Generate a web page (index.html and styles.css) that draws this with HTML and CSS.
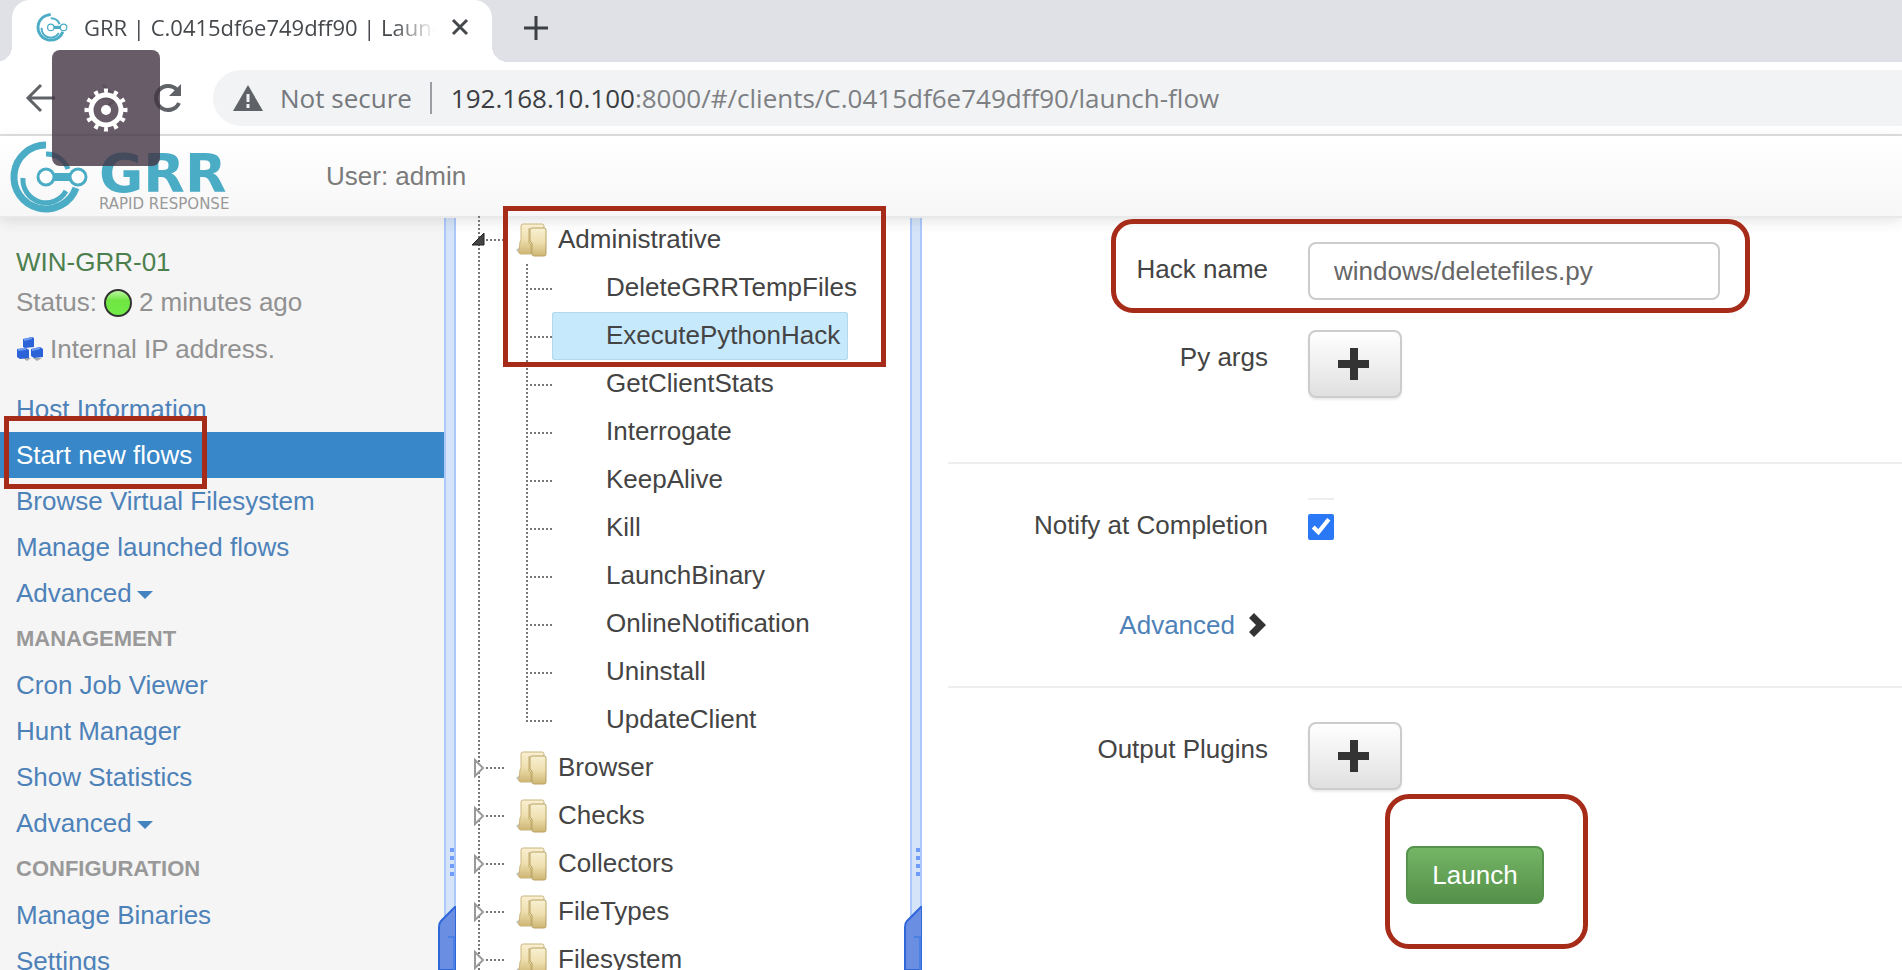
FILE: index.html
```html
<!DOCTYPE html>
<html lang="en">
<head>
<meta charset="utf-8">
<title>GRR | C.0415df6e749dff90 | Launch flow</title>
<link rel="stylesheet" href="styles.css">
</head>
<body>
<svg class="defs" aria-hidden="true">
  <defs>
    <linearGradient id="gold" x1="0" y1="0" x2="0" y2="1">
      <stop offset="0" stop-color="#f8f0d2"/><stop offset="0.5" stop-color="#efe0b0"/><stop offset="1" stop-color="#cdb573"/>
    </linearGradient>
    <linearGradient id="green" x1="0" y1="0" x2="0" y2="1">
      <stop offset="0" stop-color="#c4f8a8"/><stop offset="0.4" stop-color="#6fe642"/><stop offset="1" stop-color="#72ec48"/>
    </linearGradient>
    <symbol id="mark" viewBox="0 0 80 80">
      <g fill="none" stroke="#4bacc6">
        <path d="M37 9A32 32 0 1 0 67 52" stroke-width="7"/>
        <path d="M14 42A23 23 0 0 0 57 55" stroke-width="5"/>
        <path d="M37 18A23 23 0 0 1 59 33" stroke-width="5"/>
        <path d="M44 41H62" stroke-width="8"/>
        <circle cx="37" cy="41" r="8" fill="#fff" stroke-width="3"/>
        <circle cx="69" cy="41" r="8" fill="#fff" stroke-width="3"/>
      </g>
    </symbol>
    <symbol id="folder" viewBox="0 0 32 34">
      <path d="M0 27l5-4v9z" fill="#999" opacity="0.6"/>
      <path d="M5 3q0-2 2-2h19q2 0 2 2v27q0 1-2 1H5q-3 0-2-3l1-9 1-2z" fill="url(#gold)" stroke="#cbb67c"/>
      <path d="M13 5v15l2 2v8" fill="none" stroke="#c2ab6c"/>
      <path d="M14 7q0-2 2-2h12q2 0 2 2v24q0 2-2 2H18q-2 0-2-2V20l-2-2z" fill="url(#gold)" stroke="#b9a265"/>
    </symbol>
    <symbol id="plus" viewBox="0 0 32 32"><path d="M12 0h8v12h11v8H20v12h-8V20H0v-8h12z" fill="#333"/></symbol>
    <symbol id="closed" viewBox="0 0 16 20"><path d="M5 2v16l8-8z" fill="#fff" stroke="#999" stroke-width="2"/></symbol>
    <symbol id="handle" viewBox="0 0 18 64">
      <path d="M17 1L3 15Q1 17 1 21V64H18V1z" fill="#6a8fe2" stroke="#2f66d8" stroke-width="2"/>
      <path d="M10 31h6v33" fill="none" stroke="#4a80e4" stroke-width="2"/>
    </symbol>
  </defs>
</svg>

<div class="tabstrip">
  <div class="tab">
    <svg class="tab-icon"><use href="#mark"/></svg>
    <span class="tab-title">GRR | C.0415df6e749dff90 | Launch flow</span>
    <button class="plain" aria-label="Close tab"><svg width="18" height="18" viewBox="0 0 18 18"><path d="M2 2l14 14M16 2L2 16" stroke="#45484c" stroke-width="3"/></svg></button>
  </div>
  <button class="plain new-tab" aria-label="New tab"><svg width="24" height="24" viewBox="0 0 24 24"><path d="M12 0v24M0 12h24" stroke="#3c4043" stroke-width="3"/></svg></button>
</div>

<div class="toolbar">
  <button class="plain" aria-label="Back"><svg width="30" height="30" viewBox="0 0 30 30"><path d="M30 15H3M16 2L3 15l13 13" fill="none" stroke="#5f6368" stroke-width="3"/></svg></button>
  <button class="plain" aria-label="Forward"><svg width="30" height="30" viewBox="0 0 30 30"><path d="M0 15h27M14 2l13 13-13 13" fill="none" stroke="#babcbe" stroke-width="3"/></svg></button>
  <button class="plain" aria-label="Reload"><svg width="30" height="30" viewBox="0 0 30 30"><path d="M26 20A12 12 0 1 1 24 7" fill="none" stroke="#5f6368" stroke-width="4"/><path d="M28 1v12H16z" fill="#5f6368"/></svg></button>
  <div class="omnibox">
    <svg width="30" height="26" viewBox="0 0 30 26"><path d="M15 0l15 26H0z" fill="#5f6368"/><path d="M15 9v8M15 19v4" stroke="#f1f3f4" stroke-width="3"/></svg>
    <span class="secure">Not secure</span>
    <span class="url"><span class="host">192.168.10.100</span>:8000/#/clients/C.0415df6e749dff90/launch-flow</span>
  </div>
</div>

<button class="gear" aria-label="Settings">
  <svg width="44" height="44" viewBox="0 0 44 44" fill="none" stroke="#fff">
    <circle cx="22" cy="22" r="15" stroke-width="5"/>
    <circle cx="22" cy="22" r="19" stroke-width="5" pathLength="120" stroke-dasharray="4 6" stroke-dashoffset="2"/>
    <circle cx="22" cy="22" r="5" fill="#fff" stroke="none"/>
  </svg>
</button>

<header class="navbar">
  <a class="brand" href="#" aria-label="GRR Rapid Response">
    <svg class="brand-mark"><use href="#mark"/></svg>
    <span class="brand-text"><span class="brand-name">GRR</span><span class="brand-sub">RAPID RESPONSE</span></span>
  </a>
  <span class="user">User: admin</span>
</header>

<div class="content">
  <aside class="sidebar">
    <div class="client">
      <div class="client-name">WIN-GRR-01</div>
      <div class="client-line">Status:<svg width="30" height="30" viewBox="0 0 30 30"><circle cx="15" cy="16" r="13" fill="url(#green)" stroke="#333" stroke-width="2"/></svg>2 minutes ago</div>
      <div class="client-line ip"><svg width="28" height="26" viewBox="0 0 28 26"><path d="M7 22l4 3 4-3M17 22l4 3 5-3" fill="#aaa"/><path d="M7 3l9-2 2 1v9l-9 1-2-1zM1 13l9-1 3 2v8l-9 1-3-2zM15 13l9-2 3 2v8l-9 1-3-2z" fill="#2c62d8"/><path d="M8 4l8-2M2 14l8-1M16 14l8-2" stroke="#6f9bf0" stroke-width="2"/></svg>Internal IP address.</div>
    </div>
    <nav class="nav">
      <a href="#">Host Information</a>
      <a href="#" class="active">Start new flows<span class="mark mark-nav"></span></a>
      <a href="#">Browse Virtual Filesystem</a>
      <a href="#">Manage launched flows</a>
      <a href="#">Advanced<span class="caret"></span></a>
      <h2>MANAGEMENT</h2>
      <a href="#">Cron Job Viewer</a>
      <a href="#">Hunt Manager</a>
      <a href="#">Show Statistics</a>
      <a href="#">Advanced<span class="caret"></span></a>
      <h2>CONFIGURATION</h2>
      <a href="#">Manage Binaries</a>
      <a href="#">Settings</a>
    </nav>
  </aside>

  <div class="splitter"><span class="grip"></span><svg class="handle"><use href="#handle"/></svg></div>

  <div class="tree-pane">
    <span class="mark mark-tree"></span>
    <ul class="tree">
      <li>
        <div class="node"><svg class="toggle" viewBox="0 0 16 20"><path d="M2 15H14V3z" fill="#444" stroke="#222"/></svg><span class="dots"></span><svg class="folder"><use href="#folder"/></svg><a href="#">Administrative</a></div>
        <ul class="leaves">
          <li><a href="#">DeleteGRRTempFiles</a></li>
          <li><a href="#" class="selected">ExecutePythonHack</a></li>
          <li><a href="#">GetClientStats</a></li>
          <li><a href="#">Interrogate</a></li>
          <li><a href="#">KeepAlive</a></li>
          <li><a href="#">Kill</a></li>
          <li><a href="#">LaunchBinary</a></li>
          <li><a href="#">OnlineNotification</a></li>
          <li><a href="#">Uninstall</a></li>
          <li><a href="#">UpdateClient</a></li>
        </ul>
      </li>
      <li><div class="node"><svg class="toggle"><use href="#closed"/></svg><span class="dots"></span><svg class="folder"><use href="#folder"/></svg><a href="#">Browser</a></div></li>
      <li><div class="node"><svg class="toggle"><use href="#closed"/></svg><span class="dots"></span><svg class="folder"><use href="#folder"/></svg><a href="#">Checks</a></div></li>
      <li><div class="node"><svg class="toggle"><use href="#closed"/></svg><span class="dots"></span><svg class="folder"><use href="#folder"/></svg><a href="#">Collectors</a></div></li>
      <li><div class="node"><svg class="toggle"><use href="#closed"/></svg><span class="dots"></span><svg class="folder"><use href="#folder"/></svg><a href="#">FileTypes</a></div></li>
      <li><div class="node"><svg class="toggle"><use href="#closed"/></svg><span class="dots"></span><svg class="folder"><use href="#folder"/></svg><a href="#">Filesystem</a></div></li>
    </ul>
  </div>

  <div class="splitter"><span class="grip"></span><svg class="handle"><use href="#handle"/></svg></div>

  <main class="form">
    <div class="row">
      <span class="mark mark-hack"></span>
      <label for="hack">Hack name</label>
      <input class="text" id="hack" type="text" value="windows/deletefiles.py">
    </div>
    <div class="row args">
      <label for="args">Py args</label>
      <button class="btn" id="args" aria-label="Add argument"><svg width="32" height="32"><use href="#plus"/></svg></button>
    </div>
    <hr>
    <div class="row notify">
      <label for="notify">Notify at Completion</label>
      <span class="check"><input id="notify" type="checkbox" checked></span>
    </div>
    <div class="row more">
      <a href="#">Advanced<svg width="20" height="26" viewBox="0 0 20 26"><path d="M1 6l5-5 12 12L6 25l-5-5 7-7z" fill="#333"/></svg></a>
    </div>
    <hr>
    <div class="row plugins">
      <label for="plugins">Output Plugins</label>
      <button class="btn" id="plugins" aria-label="Add output plugin"><svg width="32" height="32"><use href="#plus"/></svg></button>
    </div>
    <div class="actions">
      <span class="launch-wrap"><button class="launch">Launch</button><span class="mark mark-launch"></span></span>
    </div>
  </main>
</div>
</body>
</html>
```

FILE: styles.css
```css
* { box-sizing: border-box; }

body {
  margin: 0;
  height: 100vh;
  overflow: hidden;
  display: flex;
  flex-direction: column;
  background: #fff;
  color: #444;
  font: 26px/38px "Liberation Sans", Arial, sans-serif;
}

a { color: inherit; text-decoration: none; }
svg { display: block; flex: none; }
ul { list-style: none; margin: 0; padding: 0; }
.defs { position: absolute; width: 0; height: 0; }

.plain { border: 0; padding: 0; background: none; flex: none; }

/* browser frame */
.tabstrip {
  flex: none;
  display: flex;
  align-items: stretch;
  height: 62px;
  padding-left: 12px;
  background: #dfe1e6;
  font-family: "Open Sans", "Noto Sans", sans-serif;
}
.tab {
  position: relative;
  display: flex;
  align-items: center;
  width: 480px;
  padding: 0 23px 8px 24px;
  border-radius: 18px 18px 0 0;
  background: #fff;
}
.tab::before, .tab::after {
  content: "";
  position: absolute;
  bottom: 0;
  width: 16px;
  height: 16px;
}
.tab::before { right: 100%; background: radial-gradient(circle at 0 0, transparent 16px, #fff 16px); }
.tab::after { left: 100%; background: radial-gradient(circle at 100% 0, transparent 16px, #fff 16px); }
.tab-icon { width: 32px; height: 32px; }
.tab-title {
  flex: 1;
  margin: 0 16px;
  overflow: hidden;
  white-space: nowrap;
  font-size: 22px;
  color: #45484c;
  -webkit-mask-image: linear-gradient(to right, #000 88%, transparent);
  mask-image: linear-gradient(to right, #000 88%, transparent);
}
.new-tab { margin: 0 0 6px 32px; }

.toolbar {
  flex: none;
  display: flex;
  align-items: center;
  gap: 34px;
  height: 74px;
  padding-left: 25px;
  border-bottom: 2px solid #e0e0e0;
  font-family: "Open Sans", "Noto Sans", sans-serif;
}
.omnibox {
  flex: 1;
  display: flex;
  align-items: center;
  height: 56px;
  margin-left: -4px;
  padding-left: 20px;
  border-radius: 28px 0 0 28px;
  background: #f1f3f4;
  color: #7d7f83;
}
.secure {
  margin-left: 17px;
  padding-right: 18px;
  border-right: 2px solid #9a9da1;
  line-height: 32px;
  color: #75787c;
}
.url { margin-left: 19px; white-space: nowrap; }
.host { color: #3b3d42; }

.gear {
  position: absolute;
  left: 52px;
  top: 50px;
  z-index: 5;
  display: grid;
  place-items: center;
  width: 108px;
  height: 116px;
  padding: 4px 0 0;
  border: 0;
  border-radius: 8px;
  background: rgba(66, 51, 66, 0.8);
}

/* application header */
.navbar {
  position: relative;
  z-index: 2;
  flex: none;
  display: flex;
  align-items: center;
  height: 80px;
  padding-left: 9px;
  background: linear-gradient(#fff, #f7f7f7);
  box-shadow: 0 2px 0 #e9e9e9, 0 4px 14px rgba(0, 0, 0, 0.12);
}
.brand { display: flex; align-items: center; width: 317px; }
.brand-mark { width: 80px; height: 80px; }
.brand-text { display: flex; flex-direction: column; margin-left: 10px; padding-top: 8px; font-family: "DejaVu Sans", sans-serif; }
.brand-name { font-size: 54px; line-height: 48px; font-weight: bold; color: #4bacc6; }
.brand-sub { font-size: 15px; line-height: 12px; color: #999; white-space: nowrap; }
.user { color: #7b7b7b; }

.content { flex: 1; min-height: 0; display: flex; }

/* left navigation */
.sidebar { flex: none; width: 444px; background: #f5f5f5; }
.client { padding: 26px 16px 16px; line-height: 40px; color: #919191; }
.client-name { color: #4c7f4e; }
.client-line { display: flex; align-items: center; gap: 6px; white-space: nowrap; }
.ip { margin-top: 7px; margin-bottom: 1px; }
.nav a, .nav h2 {
  position: relative;
  display: flex;
  align-items: center;
  height: 46px;
  margin: 0;
  padding-left: 16px;
  white-space: nowrap;
}
.nav a { color: #4d82b9; }
.nav h2 { font-size: 22px; color: #999; }
.nav .active { background: #3887c8; color: #fff; }
.caret {
  margin: 4px 0 0 5px;
  border: 8px solid transparent;
  border-top-color: #4383c0;
  border-bottom-width: 0;
}

.splitter {
  position: relative;
  z-index: 1;
  flex: none;
  width: 12px;
  border: solid #acc8fa;
  border-width: 0 2px;
  background: #d5e4f8;
}
.grip {
  position: absolute;
  right: 0;
  bottom: 94px;
  width: 4px;
  height: 28px;
  background: repeating-linear-gradient(#6f9bfa 0 4px, transparent 4px 8px);
}
.handle { position: absolute; right: -2px; bottom: 0; width: 18px; height: 64px; }

/* flow tree */
.tree-pane { position: relative; z-index: 3; flex: none; width: 454px; padding-left: 14px; }
.tree > li {
  background: repeating-linear-gradient(#777 0 2px, transparent 2px 4px) 8px 0 / 2px 100% no-repeat;
}
.node { display: flex; align-items: center; height: 48px; }
.node a { padding-bottom: 2px; }
.toggle { width: 16px; height: 20px; }
.dots { width: 18px; height: 2px; background: repeating-linear-gradient(to right, #777 0 2px, transparent 2px 4px); }
.folder { width: 32px; height: 34px; margin: 0 10px 0 12px; }
.leaves { margin-left: 56px; }
.leaves li {
  display: flex;
  height: 48px;
  padding-left: 26px;
  background:
    repeating-linear-gradient(#777 0 2px, transparent 2px 4px) 0 0 / 2px 100% no-repeat,
    repeating-linear-gradient(to right, #777 0 2px, transparent 2px 4px) 0 24px / 26px 2px no-repeat;
}
.leaves li:last-child { background-size: 2px 26px, 26px 2px; }
.leaves a { padding: 0 8px 0 54px; line-height: 46px; border-radius: 3px; }
.leaves .selected { background: #c6e9fc; box-shadow: inset 0 0 0 1px #b4d9ee; }

/* flow form */
.form { flex: 1; min-width: 0; padding: 26px 0 0 26px; }
.row { position: relative; display: flex; align-items: flex-start; gap: 40px; }
.row label { width: 320px; margin-top: 8px; text-align: right; }
.text {
  width: 412px;
  height: 58px;
  padding: 0 24px;
  border: 2px solid #ccc;
  border-radius: 8px;
  font: inherit;
  color: #666;
  background: #fff;
}
.btn {
  display: grid;
  place-items: center;
  width: 94px;
  height: 68px;
  padding: 0 2px 0 0;
  border: 2px solid #ccc;
  border-radius: 8px;
  background: linear-gradient(#fff, #e0e0e0);
  box-shadow: 0 2px 2px rgba(0, 0, 0, 0.08);
}
.args { margin-top: 30px; }
hr { height: 2px; margin: 64px 0 34px; border: 0; background: #eee; }
.check { padding-top: 14px; border-top: 2px solid #eee; line-height: 0; }
.check input { width: 26px; height: 26px; margin: 0; accent-color: #2b78f6; }
.more { margin-top: 62px; width: 320px; justify-content: flex-end; }
.more a { display: flex; align-items: center; gap: 13px; color: #4d82b9; }
.more + hr { margin: 42px 0 34px; }
.actions { margin: 56px 0 0 458px; }
.launch-wrap { position: relative; display: inline-block; }
.launch {
  display: block;
  width: 138px;
  height: 58px;
  border: 2px solid #55934d;
  border-radius: 8px;
  background: linear-gradient(#74b566, #559149);
  color: #fff;
  font: inherit;
}

/* highlight frames */
.mark { position: absolute; z-index: 4; border: 5px solid #a62c19; pointer-events: none; }
.mark-nav { left: 4px; top: -16px; width: 203px; height: 73px; }
.mark-tree { left: 47px; top: -10px; width: 383px; height: 161px; }
.mark-hack { left: 163px; top: -23px; width: 639px; height: 94px; border-radius: 22px; }
.mark-launch { inset: -52px -44px -45px -21px; border-radius: 24px; }
```
